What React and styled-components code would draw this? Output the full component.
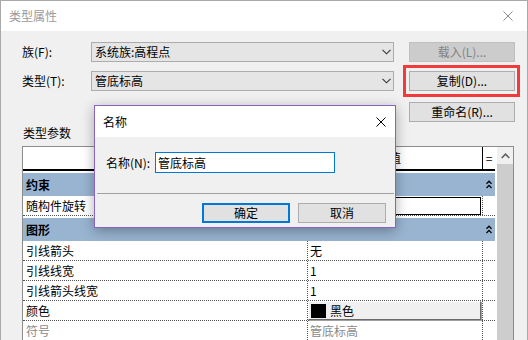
import React from 'react';
import styled, { createGlobalStyle } from 'styled-components';

const GlobalStyle = createGlobalStyle`
  * { box-sizing: border-box; }
  html, body { margin: 0; padding: 0; background: #fff; }
  body {
    font-family: "Noto Sans CJK SC", "Noto Sans", sans-serif;
    font-size: 12px;
    color: #000;
  }
`;

const Window = styled.div`
  position: relative;
  width: 528px;
  height: 340px;
  border: 1px solid #a9a9a9;
  border-bottom: none;
  background: #f0f0f0;
  display: flex;
  flex-direction: column;
  overflow: hidden;
`;

const TitleBar = styled.div`
  height: ${p => p.$h || 30}px;
  flex-shrink: 0;
  background: #fff;
  display: flex;
  align-items: center;
  justify-content: space-between;
  padding: 0 ${p => p.$pr || 14}px 0 8px;
  color: ${p => p.$muted ? '#9a9a9a' : '#000'};
  line-height: 16px;
`;

const Body = styled.div`
  flex: 1;
  min-height: 0;
  display: flex;
  flex-direction: column;
  padding: 11px 12px 0 21px;
`;

const TopGrid = styled.div`
  display: grid;
  grid-template-columns: 54px 303px 106px;
  grid-template-rows: 20px 20px 22px;
  column-gap: 15px;
  row-gap: 9px;
`;

const Label = styled.div`
  line-height: 20px;
  white-space: nowrap;
`;

const Select = styled.div`
  display: flex;
  align-items: center;
  justify-content: space-between;
  height: 20px;
  padding: 0 2px 0 3px;
  background: #e5e5e5;
  border: 1px solid #acacac;
  line-height: 18px;
`;

const Button = styled.button`
  font-family: inherit;
  font-size: 12px;
  height: 20px;
  width: ${p => p.$w ? `${p.$w}px` : '100%'};
  padding: 0;
  line-height: 16px;
  color: ${p => p.disabled ? '#838383' : '#000'};
  background: ${p => p.disabled ? '#cccccc' : '#e1e1e1'};
  border: ${p => p.$primary ? '2px solid #0078d7' : `1px solid ${p.disabled ? '#bfbfbf' : '#adadad'}`};
  align-self: end;
`;

const Marked = styled.div`
  position: relative;
  &::after {
    content: '';
    position: absolute;
    left: -6px;
    right: -5px;
    top: -6px;
    bottom: -6px;
    border: 3px solid #f23a3a;
    pointer-events: none;
  }
`;

const SectionLabel = styled.div`
  margin: 3px 0 5px 1px;
  line-height: 16px;
`;

const TableFrame = styled.div`
  flex: 1;
  min-height: 0;
  width: 492px;
  display: flex;
  background: #fff;
  border: 1px solid #8c8c8c;
  border-bottom: none;
  overflow: hidden;
`;

const Grid = styled.div`
  width: 472px;
  display: flex;
  flex-direction: column;
`;

const HeaderRow = styled.div`
  display: grid;
  grid-template-columns: 284px 175px 13px;
  height: 24px;
  border-bottom: 2px solid #000;
  line-height: 22px;
`;

const HeaderCell = styled.div`
  text-align: center;
  border-left: ${p => p.$first ? 'none' : '1px solid #000'};
`;

const GroupRow = styled.div`
  margin-top: 2px;
  height: 23px;
  flex-shrink: 0;
  display: grid;
  grid-template-columns: 459px 13px;
  align-items: center;
  background: #99b4d1;
  font-weight: bold;
  padding-left: 3px;
`;

const GroupIcon = styled.div`
  display: flex;
  padding-left: 1px;
`;

const DataRow = styled.div`
  display: grid;
  grid-template-columns: 284px 175px 13px;
  height: 20px;
  flex-shrink: 0;
  border-bottom: 1px dotted #555;
  line-height: 19px;
  color: ${p => p.$muted ? '#8a8a8a' : '#000'};
`;

const NameCell = styled.div`
  padding-left: 3px;
  white-space: nowrap;
`;

const ValueCell = styled.div`
  display: flex;
  align-items: center;
  border-left: 1px dotted #555;
  padding-left: ${p => p.$pad ? 2 : 0}px;
  padding-right: 1px;
`;

const SideCell = styled.div`
  border-left: 1px dotted #555;
`;

const BoxInput = styled.div`
  width: 100%;
  height: 18px;
  background: #fff;
  border: 1px solid #000;
`;

const ColorButton = styled.div`
  width: 100%;
  height: 19px;
  display: flex;
  align-items: center;
  gap: 4px;
  padding-left: 2px;
  background: #f0f0f0;
  border: 1px solid;
  border-color: #fff #6a6a6a #6a6a6a #fff;
  box-shadow: 1px 1px 0 #a0a0a0;
`;

const Swatch = styled.span`
  width: 15px;
  height: 14px;
  background: #000;
`;

const Scrollbar = styled.div`
  width: 16px;
  margin-left: 2px;
  display: flex;
  flex-direction: column;
  background: #f0f0f0;
`;

const ScrollArrow = styled.div`
  height: 17px;
  display: flex;
  align-items: center;
  justify-content: center;
`;

const ScrollThumb = styled.div`
  flex: 1;
  background: #cdcdcd;
`;

const Dialog = styled.div`
  position: absolute;
  left: 93px;
  top: 104px;
  width: 302px;
  height: 123px;
  display: flex;
  flex-direction: column;
  background: #f0f0f0;
  border: 1px solid #8764c2;
  box-shadow: 0 3px 12px rgba(0, 0, 0, 0.32);
`;

const DialogBody = styled.div`
  padding: 15px 0 0 11px;
`;

const FieldRow = styled.div`
  display: flex;
  align-items: center;
`;

const FieldLabel = styled.div`
  width: 49px;
  white-space: nowrap;
`;

const TextInput = styled.div`
  width: 180px;
  height: 21px;
  padding-left: 2px;
  background: #fff;
  border: 1px solid #0078d7;
  line-height: 19px;
`;

const Separator = styled.div`
  margin: 20px 1px 0 2px;
  border-top: 1px solid #a0a0a0;
`;

const ButtonRow = styled.div`
  display: flex;
  justify-content: flex-end;
  gap: 8px;
  padding: 9px 9px 0 0;
`;

const Close = ({ color = '#000', size = 10 }) => (
  <svg width={size} height={size} viewBox="0 0 10 10">
    <path d="M0.5 0.5 L9.5 9.5 M9.5 0.5 L0.5 9.5" stroke={color} strokeWidth="1" fill="none" />
  </svg>
);

const Chevron = () => (
  <svg width="9" height="6" viewBox="0 0 9 6">
    <polyline points="0.5,0.8 4.5,4.8 8.5,0.8" stroke="#333" strokeWidth="1.1" fill="none" />
  </svg>
);

const DoubleUp = () => (
  <svg width="6" height="9" viewBox="0 0 6 9">
    <polyline points="0.5,3.8 3,1.2 5.5,3.8" stroke="#000" strokeWidth="1.3" fill="none" />
    <polyline points="0.5,8 3,5.4 5.5,8" stroke="#000" strokeWidth="1.3" fill="none" />
  </svg>
);

const ScrollUp = () => (
  <svg width="9" height="6" viewBox="0 0 9 6">
    <polyline points="0.7,5 4.5,1.2 8.3,5" stroke="#606060" strokeWidth="1.6" fill="none" />
  </svg>
);

const rows = [
  { group: '约束' },
  { name: '随构件旋转', kind: 'input' },
  { group: '图形' },
  { name: '引线箭头', value: '无' },
  { name: '引线线宽', value: '1' },
  { name: '引线箭头线宽', value: '1' },
  { name: '颜色', kind: 'color', value: '黑色' },
  { name: '符号', value: '管底标高', muted: true },
];

const renderValue = (row) => {
  if (row.kind === 'input') return <ValueCell><BoxInput /></ValueCell>;
  if (row.kind === 'color') {
    return (
      <ValueCell>
        <ColorButton><Swatch />{row.value}</ColorButton>
      </ValueCell>
    );
  }
  return <ValueCell $pad>{row.value}</ValueCell>;
};

const App = () => {
  return (
    <Window>
      <GlobalStyle />
      <TitleBar $muted>
        <span>类型属性</span>
        <Close color="#8a8a8a" />
      </TitleBar>

      <Body>
        <TopGrid>
          <Label>族(F):</Label>
          <Select><span>系统族:高程点</span><Chevron /></Select>
          <Button disabled>载入(L)...</Button>

          <Label>类型(T):</Label>
          <Select><span>管底标高</span><Chevron /></Select>
          <Marked><Button>复制(D)...</Button></Marked>

          <span />
          <span />
          <Button>重命名(R)...</Button>
        </TopGrid>

        <SectionLabel>类型参数</SectionLabel>

        <TableFrame>
          <Grid>
            {/* the name column header sits under the dialog */}
            <HeaderRow>
              <HeaderCell $first />
              <HeaderCell>值</HeaderCell>
              <HeaderCell>=</HeaderCell>
            </HeaderRow>
            {rows.map((row, i) =>
              row.group ? (
                <GroupRow key={i}>
                  <span>{row.group}</span>
                  <GroupIcon><DoubleUp /></GroupIcon>
                </GroupRow>
              ) : (
                <DataRow key={i} $muted={row.muted}>
                  <NameCell>{row.name}</NameCell>
                  {renderValue(row)}
                  <SideCell />
                </DataRow>
              )
            )}
          </Grid>
          <Scrollbar>
            <ScrollArrow><ScrollUp /></ScrollArrow>
            <ScrollThumb />
          </Scrollbar>
        </TableFrame>
      </Body>

      <Dialog>
        <TitleBar $h={31} $pr={9}>
          <span>名称</span>
          <Close />
        </TitleBar>
        <DialogBody>
          <FieldRow>
            <FieldLabel>名称(N):</FieldLabel>
            <TextInput>管底标高</TextInput>
          </FieldRow>
        </DialogBody>
        <Separator />
        <ButtonRow>
          <Button $w={88} $primary>确定</Button>
          <Button $w={88}>取消</Button>
        </ButtonRow>
      </Dialog>
    </Window>
  );
};

export default App;
